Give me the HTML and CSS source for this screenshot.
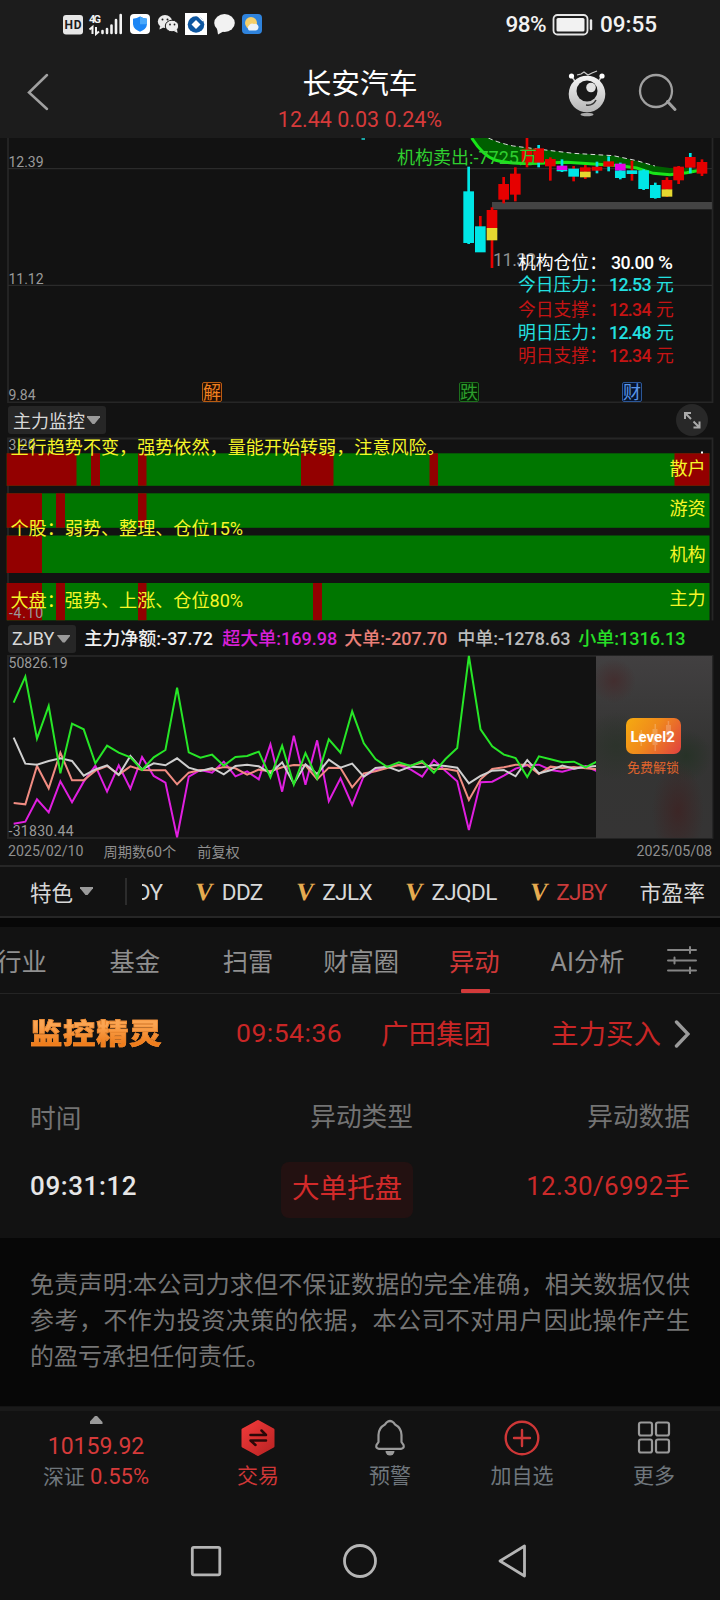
FILE: index.html
```html
<!DOCTYPE html>
<html lang="zh-CN">
<head>
    <meta charset="UTF-8">
    <meta name="viewport" content="width=device-width, initial-scale=1.0">
    <title>长安汽车</title>
    <link rel="stylesheet" href="styles.css">
</head>
<body>
    <div class="status">
        <svg class="status-icons" width="202" height="24" viewBox="62 12 202 24">
            <rect x="63" y="15" width="20" height="19.500" rx="3" fill="#e6e6e6"/>
            <text x="64.500" y="29" font-size="12" font-weight="700" fill="#1c1c1c" textLength="17">HD</text>
            <text x="89" y="23" font-size="11" font-weight="700" fill="#f2f2f2" textLength="12">4G</text>
            <path d="M92.500 34v-7l-3 2.500M96 27v7l3-2.500" fill="none" stroke="#f2f2f2" stroke-width="2"/>
            <path d="M102.500 31v2M107 29v4M111.500 25.500v7.500M116 20v13M120.700 15v18" stroke="#f2f2f2" stroke-width="2.600" stroke-linecap="round"/>
            <rect x="130" y="14" width="20" height="20" rx="4" fill="#fff"/>
            <path d="M140 16.500q3 2 7 2.200v5.500q-.5 5-7 7.500q-6.500-2.500-7-7.500v-5.500q4-.2 7-2.200z" fill="#1c86f5"/>
            <path d="M140 16.500q3 2 7 2.200v5.500h-7z" fill="#49a8fb"/>
            <ellipse cx="165" cy="21.500" rx="7.200" ry="6.500" fill="#ececec"/>
            <path d="M160 26l-.5 3.500 4-2z" fill="#ececec"/>
            <ellipse cx="172" cy="26" rx="6.700" ry="5.800" fill="#ececec" stroke="#1c1c1c" stroke-width="1"/>
            <path d="M174 31l3.500 2-.5-4z" fill="#ececec"/>
            <g fill="#1c1c1c"><circle cx="162.500" cy="19.500" r="1"/><circle cx="167.500" cy="19.500" r="1"/><circle cx="170" cy="24.500" r=".9"/><circle cx="174.500" cy="24.500" r=".9"/></g>
            <rect x="185" y="13" width="22" height="22" fill="#fff"/>
            <circle cx="196" cy="24.500" r="8.300" fill="#0d56a0"/>
            <path d="M196 20l4.500 4.500-4.500 4.500-4.500-4.500z" fill="#fff"/>
            <path d="M197 15l6 6M200 15.500l4 4" stroke="#fff" stroke-width="1.200"/>
            <ellipse cx="224.500" cy="23" rx="10.300" ry="9" fill="#f2f2f2"/>
            <path d="M217 28l1 6.500 7-4z" fill="#f2f2f2"/>
            <rect x="242" y="14" width="20" height="20" rx="4" fill="#2f83dc"/>
            <circle cx="251" cy="23" r="6" fill="#f6d06b"/>
            <path d="M249 30.500a3.500 3.500 0 0 1 0-5a4 4 0 0 1 5-1.500a3.300 3.300 0 0 1 4.500 3.500q-.5 3-3 3z" fill="#eef3f8"/>
        </svg>
        <div class="status-right">
            <span class="battery-text">98%</span>
            <svg width="42" height="24" viewBox="0 0 42 24">
                <rect x="1.500" y="3" width="34" height="19.500" rx="4" fill="none" stroke="#e6e6e6" stroke-width="1.800"/>
                <rect x="4.500" y="6" width="28" height="13.500" rx="1.500" fill="#f2f2f2"/>
                <path d="M39 8.500v8.500" stroke="#e6e6e6" stroke-width="2.400" stroke-linecap="round"/>
            </svg>
            <span>09:55</span>
        </div>
    </div>

    <header class="header">
        <svg class="back" width="22" height="40" viewBox="0 0 22 40">
            <path d="M20 3L2 20.500 20 37" fill="none" stroke="#a0a0a0" stroke-width="2.500" stroke-linecap="round"/>
        </svg>
        <div class="stock">
            <h1>长安汽车</h1>
            <p>12.44 0.03 0.24%</p>
        </div>
        <div class="header-actions">
            <svg width="40" height="48" viewBox="0 0 40 48">
                <defs>
                    <linearGradient id="ball" x1="0" y1="0" x2="0" y2="1"><stop offset="0" stop-color="#f5f5f5"/><stop offset="1" stop-color="#b5b5b5"/></linearGradient>
                </defs>
                <path d="M4.500 7l4 6M35 7l-4 6" stroke="#ccc" stroke-width="1.500"/>
                <circle cx="4.500" cy="7" r="2.600" fill="#fff"/><circle cx="35" cy="7" r="2.600" fill="#fff"/>
                <path d="M10 6l4-1 3-2 4 3 4-2 5-2" fill="none" stroke="#ccc" stroke-width="1.200"/>
                <circle cx="20" cy="25" r="18.300" fill="url(#ball)"/>
                <circle cx="20" cy="22" r="10.500" fill="#191919"/>
                <circle cx="24" cy="18.500" r="4.800" fill="#e2e2e2"/>
                <path d="M19 36q7 1 10-5" fill="none" stroke="#333" stroke-width="1.500"/>
                <ellipse cx="20" cy="45.500" rx="6.500" ry="1.700" fill="#aaa"/>
            </svg>
            <svg width="40" height="40" viewBox="0 0 40 40">
                <circle cx="18" cy="18" r="16" fill="none" stroke="#a0a0a0" stroke-width="2.300"/>
                <path d="M29.500 28.500l7.500 8" stroke="#a0a0a0" stroke-width="3" stroke-linecap="round"/>
            </svg>
        </div>
    </header>

    <!-- K线 -->
    <svg class="kline" width="720" height="265" viewBox="0 138 720 265">
        <path d="M8 138V402.500H712.500V138" fill="none" stroke="#262626" stroke-width="1.800"/>
        <path d="M8 168.700H712M8 285.300H712" stroke="#2b2b2b" stroke-width="1.200"/>
        <rect x="361.500" y="138" width="3.500" height="2" fill="#19a5a5"/>
        <g transform="translate(380 130) scale(.3333)">
            <path d="M275 24Q310 78 345 90T480 100L560 97 640 102 720 107 770 114 820 130 870 134 920 128 960 121 930 115 870 114 825 108 770 92 700 77 580 70 480 58 400 48Q360 40 325 24z" fill="#005f00"/>
            <path d="M275 24Q310 78 345 90T480 100L560 97 640 102 720 107 770 114 820 130 870 134 920 128 960 121" fill="none" stroke="#19e619" stroke-width="9"/>
            <path d="M325 24Q360 40 400 48L480 58 580 70 700 77 770 92 825 108" fill="none" stroke="#ddd" stroke-width="3" stroke-dasharray="14 10"/>
            <rect x="336" y="216" width="660" height="22" fill="#444"/>
            <g id="candles"></g>
        </g>
        <text x="397" y="163.500" class="sell" textLength="140" lengthAdjust="spacingAndGlyphs">机构卖出:-7725万</text>
        <g class="axis">
            <text x="8.500" y="167" textLength="35">12.39</text>
            <text x="8.500" y="284" textLength="35">11.12</text>
            <text x="8.500" y="400" textLength="27">9.84</text>
        </g>
        <text x="493" y="266" fill="#8f8f8f" font-size="18" textLength="43">11.32</text>
        <g class="levels">
            <g fill="#fff"><text x="518" y="269">机构仓位：</text><text x="611" y="269" textLength="43" font-weight="500">30.00</text><text x="658" y="269" font-weight="500" textLength="15" lengthAdjust="spacingAndGlyphs">%</text></g>
            <g fill="#23e0e0"><text x="518" y="291">今日压力：</text><text x="609" y="291" textLength="42.500" font-weight="500">12.53</text><text x="656" y="291">元</text></g>
            <g fill="#c41414"><text x="518" y="315.500">今日支撑：</text><text x="609" y="315.500" textLength="42.500" font-weight="500">12.34</text><text x="656" y="315.500">元</text></g>
            <g fill="#23e0e0"><text x="518" y="339">明日压力：</text><text x="609" y="339" textLength="42.500" font-weight="500">12.48</text><text x="656" y="339">元</text></g>
            <g fill="#c41414"><text x="518" y="361.500">明日支撑：</text><text x="609" y="361.500" textLength="42.500" font-weight="500">12.34</text><text x="656" y="361.500">元</text></g>
        </g>
        <g class="marks">
            <rect x="202.500" y="382.500" width="19" height="19" rx="1.500" fill="#241003" stroke="#b85c12"/><text x="203" y="398.500" fill="#f08020">解</text>
            <rect x="459.500" y="382.500" width="19" height="19" rx="1.500" fill="#051c05" stroke="#1d6f1d"/><text x="460" y="398.500" fill="#2c9c2c">跌</text>
            <rect x="622.500" y="382.500" width="19" height="19" rx="1.500" fill="#06142c" stroke="#2c5796"/><text x="623" y="398.500" fill="#5a95e6">财</text>
        </g>
    </svg>

    <div class="panel-head">
        <div class="select">主力监控<i class="caret"></i></div>
        <div class="expand">
            <svg width="18" height="18" viewBox="0 0 18 18" fill="none" stroke="#aaa" stroke-width="2">
                <path d="M2 8V2h6M2 2l6 6M10.500 16.500h6v-6M16.500 16.500l-6-6"/>
            </svg>
        </div>
    </div>

    <svg class="monitor" width="720" height="184" viewBox="0 437 720 184">
        <path d="M8 620.500V438.500H712.500V620.500" fill="none" stroke="#262626" stroke-width="1.800"/>
        <g fill="#007600">
            <rect x="6.700" y="453.300" width="702.800" height="32.500"/>
            <rect x="6.700" y="493.300" width="702.800" height="34.500"/>
            <rect x="6.700" y="535.500" width="702.800" height="37.500"/>
            <rect x="6.700" y="583" width="702.800" height="37.300"/>
        </g>
        <g fill="#930000">
            <path d="M6.700 453.300H76.500V485.800H6.700zM91 453.300h9v32.500h-9zM138 453.300h8.500v32.500h-8.500zM301 453.300h32.500v32.500h-32.500zM429.500 453.300h8.500v32.500h-8.500zM674.500 453.300h35v32.500h-35z"/>
            <path d="M6.700 493.300H42v34.500H6.700zM56 493.300h9v34.500h-9zM138 493.300h8.500v34.500h-8.500z"/>
            <path d="M6.700 535.500H42V573H6.700z"/>
            <path d="M6.700 583H42v37.300H6.700zM56 583h9v37.300h-9zM138 583h8.500v37.300h-8.500zM313 583h9v37.300h-9z"/>
        </g>
        <g class="axis">
            <text x="8.500" y="450" textLength="27">3.20</text>
            <text x="9" y="618" textLength="34">-4.10</text>
        </g>
        <g class="tips">
            <text x="10.500" y="454">上行趋势不变，强势依然，量能开始转弱，注意风险。</text>
            <text x="10.500" y="534.500">个股：弱势、整理、仓位15%</text>
            <text x="10.500" y="607">大盘：强势、上涨、仓位80%</text>
            <text x="669.500" y="475">散户</text>
            <text x="669.500" y="515">游资</text>
            <text x="669.500" y="561">机构</text>
            <text x="669.500" y="605">主力</text>
        </g>
        <rect x="701" y="451.500" width="2" height="2" fill="#fff"/>
    </svg>

    <div class="panel-head flow-head">
        <div class="select">ZJBY<i class="caret"></i></div>
        <div class="flow-values">
            <span class="c-white">主力净额:-37.72</span>
            <span class="c-magenta">超大单:169.98</span>
            <span class="c-pink">大单:-207.70</span>
            <span class="c-gray">中单:-1278.63</span>
            <span class="c-green">小单:1316.13</span>
        </div>
    </div>

    <div class="flow">
        <svg width="720" height="184" viewBox="0 655 720 184">
            <rect x="8" y="656" width="704.500" height="182" fill="none" stroke="#262626" stroke-width="1.800"/>
            <g id="lines" transform="translate(0 640) scale(.3333)" fill="none" stroke-width="6"></g>
            <g class="axis">
                <text x="8.500" y="668" textLength="59">50826.19</text>
                <text x="8.500" y="836" textLength="65">-31830.44</text>
            </g>
        </svg>
        <div class="lock">
            <div class="level2">
                <svg width="55" height="36" viewBox="0 0 55 36" fill="#fff" opacity=".2"><path d="M13 15h4v9h-4zM26.500 11h5v16h-5zM28.500 6h1.500v27h-1.500zM40 7h5v12h-5zM41.700 3h1.500v20h-1.500zM14.500 12h1.500v16h-1.500z"/></svg>
                <b>Level2</b>
            </div>
            <span>免费解锁</span>
        </div>
    </div>
    <div class="dates">
        <span class="date-from">2025/02/10</span>
        <span class="period">周期数60个</span>
        <span>前复权</span>
        <span class="date-to">2025/05/08</span>
    </div>

    <nav class="indicators">
        <div class="group">特色<i class="caret"></i></div>
        <div class="strip">
            <span>DDY</span>
            <span><i class="vip">V</i>DDZ</span>
            <span><i class="vip">V</i>ZJLX</span>
            <span><i class="vip">V</i>ZJQDL</span>
            <span class="on"><i class="vip">V</i>ZJBY</span>
            <span class="cn">市盈率</span>
        </div>
    </nav>

    <nav class="tabs">
        <span>行业</span>
        <span>基金</span>
        <span>扫雷</span>
        <span>财富圈</span>
        <span class="active">异动</span>
        <span>AI分析</span>
        <svg width="30" height="28" viewBox="0 0 30 28" fill="none" stroke="#858585" stroke-width="2" stroke-linecap="round">
            <path d="M1 4h28M1 14.500h28M1 24.500h28M23 1v6M7.500 11.500v6M23 21.500v6"/>
        </svg>
    </nav>

    <section class="alert">
        <strong>监控精灵</strong>
        <span class="alert-time">09:54:36</span>
        <span class="alert-name">广田集团</span>
        <span class="alert-type">主力买入</span>
        <svg width="16" height="28" viewBox="0 0 16 28"><path d="M2.500 2L14 14 2.500 26" fill="none" stroke="#9a9a9a" stroke-width="3.400" stroke-linecap="round"/></svg>
    </section>

    <section class="moves">
        <div class="row head"><span class="head-time">时间</span><span>异动类型</span><span>异动数据</span></div>
        <div class="row item"><span class="time">09:31:12</span><span class="tag">大单托盘</span><span class="data">12.30/6992手</span></div>
    </section>

    <p class="disclaimer">免责声明:本公司力求但不保证数据的完全准确，相关数据仅供参考，不作为投资决策的依据，本公司不对用户因此操作产生的盈亏承担任何责任。</p>

    <footer class="bottom">
        <div class="index">
            <i class="up"></i>
            <b>10159.92</b>
            <p>深证 <em>0.55%</em></p>
        </div>
        <div class="action red">
            <svg width="36" height="38" viewBox="0 0 36 38">
                <defs><linearGradient id="hex" x1="0" y1="0" x2="1" y2="1"><stop offset="0" stop-color="#f23a3a"/><stop offset="1" stop-color="#b92323"/></linearGradient></defs>
                <path d="M18 2.500L33 10.800V27.200L18 35.500 3 27.200V10.800z" fill="url(#hex)" stroke="url(#hex)" stroke-width="3" stroke-linejoin="round"/>
                <path d="M10.500 16H26l-4.500-4.500M26 21.500H10.500l5 4.500" fill="none" stroke="#2a0808" stroke-width="2.500" stroke-linecap="round" stroke-linejoin="round"/>
            </svg>
            <span>交易</span>
        </div>
        <div class="action">
            <svg width="36" height="38" viewBox="0 0 36 38">
                <path d="M14.500 3.500Q18 .5 21.500 3.500L23 5.500Q29.500 9 29.500 16V23L31.500 26Q32.500 29.500 29 29.800H7Q3.500 29.500 4.500 26L6.500 23V16Q6.500 9 13 5.500z" fill="none" stroke="#9a9a9a" stroke-width="2.200"/>
                <path d="M13.500 32h9a4.500 4.500 0 0 1-9 0z" fill="#9a9a9a"/>
            </svg>
            <span>预警</span>
        </div>
        <div class="action">
            <svg width="36" height="38" viewBox="0 0 36 38" fill="none" stroke="#cf3737" stroke-width="2.400">
                <circle cx="18" cy="19" r="16.300"/><path d="M18 11v16M10 19h16" stroke-linecap="round"/>
            </svg>
            <span>加自选</span>
        </div>
        <div class="action">
            <svg width="36" height="38" viewBox="0 0 36 38" fill="none" stroke="#9a9a9a" stroke-width="2.200">
                <rect x="3" y="3.500" width="13" height="13" rx="2"/><rect x="20" y="3.500" width="13" height="13" rx="2"/>
                <rect x="3" y="20.500" width="13" height="13" rx="2"/><rect x="20" y="20.500" width="13" height="13" rx="2"/>
            </svg>
            <span>更多</span>
        </div>
    </footer>

    <div class="sysnav">
        <svg width="34" height="34" viewBox="0 0 34 34"><rect x="3.300" y="3.300" width="27.500" height="27.500" rx="1.500"/></svg>
        <svg width="34" height="34" viewBox="0 0 34 34"><circle cx="17" cy="17" r="15.500"/></svg>
        <svg width="34" height="34" viewBox="0 0 34 34"><path d="M3 17L27.500 2V32z"/></svg>
    </div>

    <script src="chart.js"></script>
</body>
</html>
```
FILE: styles.css
```css
body {
    margin: 0;
    width: 720px;
    height: 1600px;
    overflow: hidden;
    background: #121212;
    color: #d8d8d8;
    font-family: Roboto, "Noto Sans CJK SC", sans-serif;
}

* {
    box-sizing: border-box;
}

h1, p {
    margin: 0;
    font-weight: 400;
}

i, em {
    font-style: normal;
}

svg {
    display: block;
    flex: none;
}

.status {
    display: flex;
    justify-content: space-between;
    align-items: center;
    height: 48px;
    padding: 0 63px 0 62px;
    background: #1c1c1c;
}

.status-right {
    display: flex;
    align-items: center;
    gap: 6px;
    font-size: 22.5px;
    font-weight: 500;
    color: #f2f2f2;
}

.battery-text {
    letter-spacing: -0.6px;
}

.header {
    display: grid;
    grid-template-columns: 200px 1fr 200px;
    align-items: center;
    height: 90px;
    background: #1c1c1c;
}

.back {
    margin: -2px 0 0 27px;
}

.stock {
    padding-top: 12px;
    text-align: center;
}

.stock h1 {
    font-size: 28.8px;
    line-height: 40px;
    color: #fff;
}

.stock p {
    font-size: 21.5px;
    line-height: 31px;
    color: #d63a3a;
    white-space: nowrap;
}

.header-actions {
    display: flex;
    align-items: center;
    gap: 31px;
    padding-left: 47px;
}

/* charts */
.axis {
    font-size: 14px;
    fill: #9a9a9a;
}

.sell {
    font-size: 18px;
    fill: #2fcf2f;
}

.levels {
    font-size: 17.8px;
}

.marks {
    font-size: 18px;
}

.tips {
    font-size: 18.1px;
    fill: #f5f528;
}

.panel-head {
    display: flex;
    justify-content: space-between;
    align-items: center;
    height: 34px;
    padding: 0 12px 0 8px;
}

.select {
    display: flex;
    align-items: center;
    height: 28px;
    padding: 0 6px 0 5px;
    border-radius: 3px;
    background: #262626;
    font-size: 18px;
    gap: 2px;
}

.caret {
    width: 13px;
    height: 8px;
    background: #9a9a9a;
    clip-path: polygon(0 0, 100% 0, 100% 15%, 58% 100%, 42% 100%, 0 15%);
}

.expand {
    display: flex;
    align-items: center;
    justify-content: center;
    width: 32px;
    height: 32px;
    border-radius: 50%;
    background: #282828;
}

.flow-head {
    justify-content: flex-start;
    padding-top: 1px;
}

.flow-head .select {
    padding-left: 4px;
    gap: 3px;
}

.flow-values {
    display: grid;
    grid-template-columns: 138px 122px 113px 121px auto;
    margin: -3px 0 0 8px;
    font-size: 18px;
    font-weight: 500;
    white-space: nowrap;
}

.c-white { color: #f0f0f0; }
.c-magenta { color: #d81fd8; }
.c-pink { color: #ea8078; }
.c-gray { color: #bdbdbd; }
.c-green { color: #27e027; }

.flow {
    position: relative;
}

.lock {
    position: absolute;
    top: 1px;
    right: 8px;
    width: 116px;
    height: 182px;
    display: flex;
    flex-direction: column;
    align-items: center;
    padding: 62px 2px 0 0;
    background:
        radial-gradient(circle at 18px 25px, #432e2f 0, transparent 22px),
        radial-gradient(ellipse at 82px 155px, #3c2626 0, transparent 26px),
        radial-gradient(circle at 90px 100px, #273227 0, transparent 26px),
        radial-gradient(circle at 20px 90px, #2c332b 0, transparent 34px),
        linear-gradient(#424041, #343433 50%, #353434);
    color: #e0642c;
    font-size: 13px;
}

.level2 {
    position: relative;
    width: 55px;
    height: 36px;
    border-radius: 7px;
    background: linear-gradient(125deg, #f5ab10, #f08a1c 45%, #e04040);
    margin-bottom: 3px;
}

.level2 b {
    position: absolute;
    left: 5px;
    top: 10px;
    font-size: 15px;
    line-height: 18px;
    font-weight: 700;
    color: #fff;
}

.dates {
    display: flex;
    align-items: center;
    height: 26px;
    padding: 0 8px 2px;
    font-size: 14.2px;
    color: #8f8f8f;
}

.period {
    margin: 0 21px 0 20px;
}

.date-to {
    margin-left: auto;
}

/* indicator strip */
.indicators {
    display: flex;
    align-items: center;
    height: 53px;
    border-top: 2px solid #262626;
    border-bottom: 2px solid #262626;
    font-size: 22.5px;
}

.group {
    display: flex;
    align-items: center;
    gap: 7px;
    width: 127px;
    height: 27px;
    padding: 0 0 1px 30px;
    font-size: 21.5px;
    border-right: 2px solid #2c2c2c;
}

.strip {
    display: flex;
    justify-content: flex-end;
    align-items: center;
    gap: 33px;
    width: 563px;
    margin-left: 15px;
    overflow: hidden;
    white-space: nowrap;
    letter-spacing: -0.6px;
}

.strip .cn {
    font-size: 21.8px;
    letter-spacing: 0;
}

.strip .on {
    color: #c93a3a;
}

.vip {
    display: inline-block;
    font: 700 25px/24px "Liberation Serif", serif;
    color: #e5ab50;
    margin-right: 9px;
    transform: skewX(-8deg);
}

.tabs {
    display: grid;
    grid-template-columns: repeat(6, 113.200px) auto;
    justify-content: start;
    align-items: center;
    height: 76px;
    padding: 9px 0 1px;
    margin-left: -35px;
    border-bottom: 1px solid #242424;
    background: linear-gradient(#070707 9px, transparent 9px);
    font-size: 25.3px;
    color: #8f8f8f;
    text-align: center;
    white-space: nowrap;
}

.tabs svg {
    margin-left: 23px;
}

.tabs .active {
    position: relative;
    color: #cf3737;
}

.tabs .active::after {
    content: "";
    position: absolute;
    left: 43px;
    bottom: -15px;
    width: 29px;
    height: 4px;
    border-radius: 1px;
    background: #d23a3a;
}

.alert {
    display: flex;
    align-items: center;
    height: 80px;
    padding: 0 30px;
    font-size: 27.5px;
    color: #c92626;
}

.alert span {
    padding-bottom: 4px;
}

.alert strong {
    width: 206px;
    font-size: 31px;
    font-weight: 900;
    letter-spacing: 0.8px;
    background: linear-gradient(#fba552 25%, #ef7d1c 75%);
    -webkit-background-clip: text;
    background-clip: text;
    color: transparent;
    -webkit-text-stroke: 0.6px #f08a30;
    line-height: 40px;
    transform: scale(1.04, 0.92);
    transform-origin: 0 60%;
}

.alert-time {
    width: 145px;
    font-size: 26.5px;
    letter-spacing: 0.5px;
}

.alert-name {
    width: 170px;
}

.alert svg {
    margin-left: auto;
}

.row {
    display: grid;
    grid-template-columns: 1fr 1fr 1fr;
    align-items: center;
    padding: 0 30px;
}

.row > :nth-child(2) {
    justify-self: end;
    margin-right: 57px;
}

.row > :last-child {
    justify-self: end;
}

.head {
    height: 88px;
    padding-bottom: 7px;
    font-size: 25.7px;
    color: #737373;
}

.head-time {
    padding-top: 4px;
}

.item {
    height: 76px;
    align-items: start;
}

.item .tag {
    width: 132px;
    height: 56px;
    border-radius: 8px;
    background: #231111;
    color: #d22a2a;
    font-size: 27.5px;
    line-height: 54px;
    text-align: center;
}

.time, .data {
    font-size: 26px;
    line-height: 48px;
    font-weight: 500;
    letter-spacing: 0.6px;
}

.time {
    color: #e6e6e6;
}

.data {
    color: #cc2a2a;
    font-weight: 400;
    letter-spacing: 0.3px;
}

.disclaimer {
    height: 168px;
    padding: 29px 30px;
    background: #070707;
    color: #757575;
    font-size: 24px;
    line-height: 36px;
    text-align: justify;
}

.bottom {
    display: grid;
    grid-template-columns: 192px repeat(4, 132px);
    height: 116px;
    border-top: 1px solid #141414;
    box-shadow: inset 0 4px #1a1a1a;
    color: #6f767c;
    font-size: 21px;
}

.index {
    display: flex;
    flex-direction: column;
    align-items: center;
    padding-top: 9px;
}

.up {
    width: 13px;
    height: 8px;
    background: #9a9a9a;
    clip-path: polygon(42% 0, 58% 0, 100% 75%, 100% 100%, 0 100%, 0 75%);
}

.index b {
    margin-top: 8px;
    font-size: 23px;
    line-height: 30px;
    font-weight: 400;
    color: #d63a3a;
}

.index p {
    line-height: 30px;
    white-space: nowrap;
}

.index em {
    color: #d63a3a;
    font-size: 22px;
}

.action {
    display: flex;
    flex-direction: column;
    align-items: center;
    padding-top: 12px;
}

.action span {
    margin-top: 3px;
    line-height: 32px;
}

.action.red {
    color: #cf3737;
}

.sysnav {
    display: flex;
    justify-content: center;
    align-items: center;
    gap: 120px;
    height: 78px;
}

.sysnav svg {
    fill: none;
    stroke: #b5b5b5;
    stroke-width: 2.8;
    stroke-linejoin: round;
}
```
FILE: chart.js
```js
const SVG = 'http://www.w3.org/2000/svg';

function add(parent, tag, attrs) {
    const el = document.createElementNS(SVG, tag);
    for (const key in attrs) el.setAttribute(key, attrs[key]);
    parent.appendChild(el);
}

// [wick color, wick top, wick bottom, [body color, top, bottom], ...]
const R = '#e60000', C = '#00e6e6', Y = '#e6d830', M = '#e600e6';
const candles = [
    [C, 110, 342, [C, 184, 339]],
    [R, 258, 295, [C, 289, 367]],
    [R, 232, 414, [R, 240, 294], [Y, 294, 331]],
    [R, 141, 220, [R, 162, 209]],
    [R, 112, 214, [R, 131, 194]],
    [R, 24, 112, [R, 58, 97]],
    [C, 45, 112, [R, 55, 98]],
    [R, 82, 152, [R, 87, 109]],
    [C, 88, 126, [M, 107, 121], [C, 120, 124]],
    [R, 108, 154, [C, 116, 140]],
    [R, 105, 147, [R, 112, 125], [Y, 125, 142]],
    [C, 95, 130, [R, 110, 122]],
    [C, 79, 124, [R, 94, 110]],
    [C, 98, 148, [M, 101, 122], [C, 122, 144]],
    [R, 92, 152, [C, 121, 132]],
    [C, 118, 180, [C, 121, 177]],
    [C, 158, 206, [C, 165, 204]],
    [R, 142, 201, [R, 150, 178], [Y, 178, 200]],
    [R, 108, 162, [R, 110, 151]],
    [C, 69, 130, [R, 81, 113]],
    [R, 88, 138, [R, 96, 131]]
];

const candleGroup = document.getElementById('candles');
candles.forEach(([wick, top, bottom, ...bodies], i) => {
    const x = 266 + i * 35;
    add(candleGroup, 'rect', { x: x - 4, y: top, width: 8, height: bottom - top, fill: wick });
    bodies.forEach(([fill, y1, y2]) => {
        add(candleGroup, 'rect', { x: x - 16, y: y1, width: 32, height: y2 - y1, fill });
    });
});

const series = {
    '#e01fe0': [551,545,478,517,424,487,425,377,455,376,446,351,408,428,592,410,390,398,365,409,394,418,313,455,287,434,301,484,415,495,408,390,380,375,388,410,360,393,424,570,427,425,407,386,376,374,390,395,386,378,394],
    '#f08c82': [489,493,378,445,338,421,421,392,378,404,379,390,391,391,433,398,390,389,381,385,404,389,394,382,375,376,418,383,384,442,400,394,384,375,377,368,388,386,393,480,418,387,382,374,374,402,380,384,381,385,388],
    '#cfcfcf': [293,371,374,363,355,363,407,388,376,405,348,388,370,376,355,383,393,384,403,378,374,379,400,367,431,373,402,359,383,371,410,384,380,393,380,382,375,378,383,430,408,392,390,409,360,400,391,377,386,380,378],
    '#27e627': [188,110,296,198,400,251,268,370,317,338,352,390,352,330,143,337,353,344,377,351,348,335,412,317,434,339,415,298,338,214,310,357,381,367,378,363,398,357,324,48,268,319,344,354,411,349,358,367,365,382,364]
};

const lineGroup = document.getElementById('lines');
for (const stroke in series) {
    const points = series[stroke].map((y, i) => (41 + i * 35.02).toFixed(1) + ',' + y).join(' ');
    add(lineGroup, 'polyline', { points, stroke });
}
```
